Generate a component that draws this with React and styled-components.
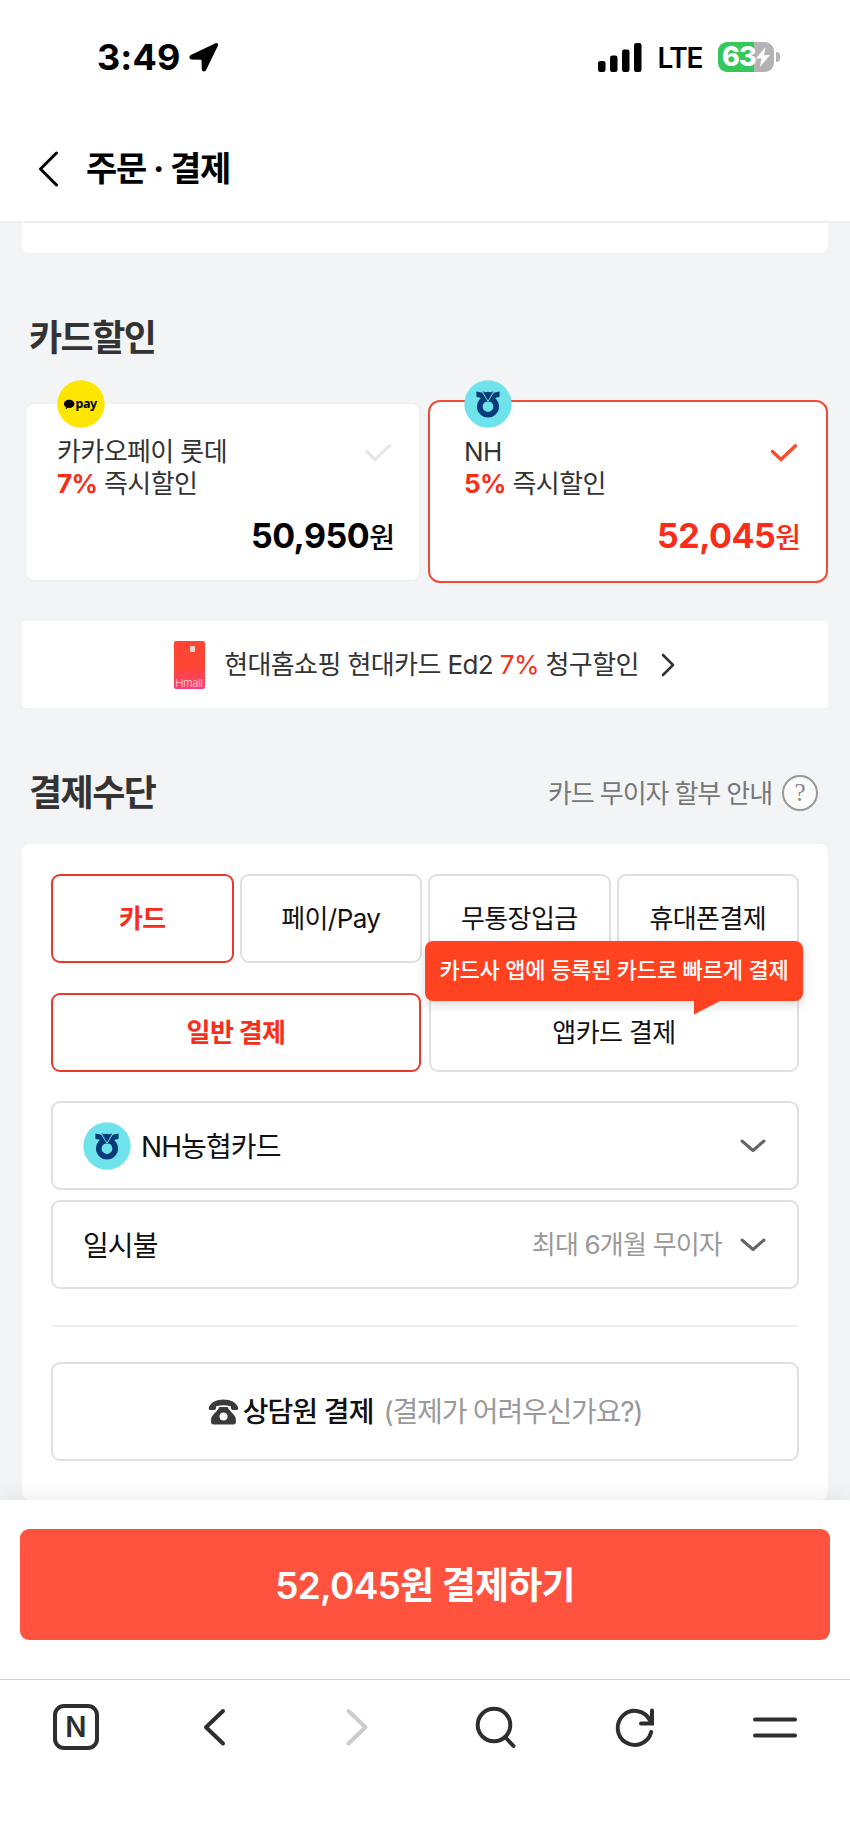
import React from 'react'
import styled, { createGlobalStyle } from 'styled-components'

const GlobalStyle = createGlobalStyle`
  * {
    box-sizing: border-box;
  }

  body {
    margin: 0;
    background: #fff;
    font-family: Inter, 'Noto Sans CJK KR', sans-serif;
    color: #111;
  }

  button {
    font-family: inherit;
    color: inherit;
    padding: 0;
    margin: 0;
    background: none;
    border: 0;
  }

  svg {
    display: block;
    flex: none;
  }
`

const Page = styled.div`
  width: 850px;
  height: 1842px;
  overflow: hidden;
  display: flex;
  flex-direction: column;
  white-space: nowrap;
`

/* status bar */

const StatusBar = styled.div`
  height: 114px;
  padding: 0 70px 0 97px;
  display: flex;
  align-items: center;
  justify-content: space-between;
`

const StatusGroup = styled.div`
  display: flex;
  align-items: center;
  gap: ${(p) => p.$gap};
`

const Time = styled.span`
  font-size: 36px;
  line-height: 40px;
  font-weight: 700;
  letter-spacing: 0.1px;
  color: #000;
`

const Network = styled.span`
  font-size: 28px;
  line-height: 34px;
  font-weight: 600;
  letter-spacing: -1.4px;
  padding-top: 2px;
  color: #000;
`

const Battery = styled.div`
  display: flex;
  align-items: center;
  gap: 2px;
`

const BatteryBody = styled.div`
  width: 56px;
  height: 30px;
  border-radius: 9px;
  display: flex;
  align-items: center;
  padding-left: 4px;
  background: linear-gradient(90deg, #34c759 64%, #b4b2b4 64%);
  color: #fff;
  font-size: 27px;
  line-height: 30px;
  font-weight: 800;
  letter-spacing: -0.8px;
`

const BatteryTip = styled.div`
  width: 4px;
  height: 10px;
  border-radius: 0 4px 4px 0;
  background: #b4b2b4;
`

/* header */

const Header = styled.header`
  height: 109px;
  padding: 3px 0 0 38px;
  display: flex;
  align-items: center;
  gap: 28px;
  border-bottom: 2px solid #eeeff0;
`

const Title = styled.h1`
  margin: 0;
  font-size: 34px;
  line-height: 44px;
  font-weight: 700;
  letter-spacing: -1.2px;
  color: #000;
`

/* content */

const Content = styled.main`
  height: 1277px;
  padding: 0 22px;
  overflow: hidden;
  background: #f3f4f6;
`

const PrevPanel = styled.div`
  height: 30px;
  border-radius: 0 0 8px 8px;
  background: #fff;
`

const SectionHead = styled.div`
  height: 50px;
  padding: 1px 10px 0 7px;
  margin-top: ${(p) => p.$top};
  display: flex;
  align-items: center;
  justify-content: space-between;
`

const SectionTitle = styled.h2`
  margin: 0;
  font-size: 36px;
  line-height: 50px;
  font-weight: 700;
  letter-spacing: -1.5px;
  color: #333;
`

const Guide = styled.div`
  display: flex;
  align-items: center;
  gap: 10px;
  font-size: 26px;
  line-height: 36px;
  letter-spacing: -1.1px;
  color: #777;
`

const GuideText = styled.span`
  padding-top: 3px;
`

const HelpMark = styled.span`
  width: 36px;
  height: 36px;
  border: 2px solid #999;
  border-radius: 50%;
  background: #fbfbfc;
  font-family: 'Liberation Serif', serif;
  font-size: 25px;
  line-height: 32px;
  text-align: center;
  letter-spacing: 0;
  color: #888;
`

const DiscountList = styled.div`
  margin-top: 38px;
  padding-left: 4px;
  display: flex;
  align-items: center;
  gap: 9px;
`

const DiscountCard = styled.div`
  position: relative;
  width: ${(p) => (p.$selected ? '400px' : '393px')};
  height: ${(p) => (p.$selected ? '183px' : '176px')};
  padding: ${(p) => (p.$selected ? '34px 28px 0 34px' : '32px 27px 0 31px')};
  border: ${(p) => (p.$selected ? '2px solid #f24b35' : '0')};
  border-radius: ${(p) => (p.$selected ? '12px' : '8px')};
  background: #fff;
  box-shadow: ${(p) => (p.$selected ? 'none' : '0 0 3px rgba(0, 0, 0, 0.05)')};
`

const CardBadge = styled.div`
  position: absolute;
  top: ${(p) => (p.$selected ? '-22px' : '-24px')};
  left: ${(p) => (p.$selected ? '34px' : '31px')};
`

const CardTop = styled.div`
  display: flex;
  justify-content: space-between;
`

const CardName = styled.p`
  margin: 0;
  font-size: 26px;
  line-height: 32px;
  letter-spacing: -0.6px;
  color: #333;
`

const Rate = styled.strong`
  font-weight: ${(p) => (p.$light ? 400 : 700)};
  color: #fa2d19;
`

const CheckBox = styled.div`
  padding-top: 7px;
`

const Price = styled.div`
  margin: 14px -3px 0 0;
  text-align: right;
  font-size: 34px;
  line-height: 44px;
  font-weight: 700;
  letter-spacing: -0.5px;
  color: ${(p) => (p.$selected ? '#fa2d19' : '#000')};

  span {
    font-size: 28px;
    font-weight: 500;
    letter-spacing: 0;
  }
`

const Banner = styled.div`
  height: 87px;
  margin-top: 38px;
  padding-right: 1px;
  border-radius: 4px;
  background: #fff;
  display: flex;
  align-items: center;
  justify-content: center;
  font-size: 26px;
  line-height: 36px;
  letter-spacing: -0.6px;
  color: #333;
`

const BannerText = styled.span`
  margin: 0 22px 0 19px;
`

const MiniCard = styled.div`
  width: 31px;
  height: 48px;
  padding: 5px 1px 0;
  border-radius: 2px;
  display: flex;
  flex-direction: column;
  justify-content: space-between;
  background: linear-gradient(#ff4634 55%, #fb3f7c);
  color: #ffb9b4;
  font-size: 11px;
  line-height: 12px;
  letter-spacing: -0.4px;
`

const Chip = styled.i`
  width: 5px;
  height: 6px;
  margin-left: 15px;
  border-radius: 1px;
  background: #e9d9cf;
`

/* payment panel */

const Panel = styled.section`
  height: 656px;
  margin-top: 27px;
  padding: 30px 29px 0;
  border-radius: 8px;
  background: #fff;
`

const MethodGrid = styled.div`
  display: grid;
  grid-template-columns: repeat(4, 1fr);
  gap: 6px;
`

const TypeGrid = styled.div`
  position: relative;
  display: grid;
  grid-template-columns: repeat(2, 1fr);
  gap: 8px;
  margin-top: 30px;
`

const Option = styled.button`
  height: ${(p) => p.$height};
  border: 2px solid ${(p) => (p.$active ? '#e8392a' : '#e0e0e0')};
  border-radius: 9px;
  font-size: 26px;
  line-height: 36px;
  font-weight: ${(p) => (p.$active ? 700 : 400)};
  letter-spacing: -0.6px;
  color: ${(p) => (p.$active ? '#fa2d19' : '#111')};
`

const Tooltip = styled.div`
  position: absolute;
  top: -52px;
  right: -4px;
  width: 378px;
  height: 60px;
  border-radius: 8px;
  background: #ff4320;
  box-shadow: 0 4px 12px rgba(0, 0, 0, 0.14);
  font-size: 22px;
  line-height: 59px;
  font-weight: 500;
  letter-spacing: -0.2px;
  text-align: center;
  color: #fff;

  svg {
    position: absolute;
    top: 59px;
    left: 269px;
  }
`

const Select = styled.div`
  height: 89px;
  margin-top: ${(p) => p.$top};
  padding: 0 31px 0 30px;
  border: 2px solid #e0e0e0;
  border-radius: 9px;
  display: flex;
  align-items: center;
  font-size: 28px;
  line-height: 40px;
  letter-spacing: -0.9px;

  svg:last-child {
    margin-left: 18px;
  }
`

const SelectLabel = styled.span`
  flex: 1;
  padding-top: 3px;
  margin-left: ${(p) => (p.$icon ? '10px' : '0')};
`

const SelectHint = styled.span`
  padding-top: 1px;
  font-size: 26px;
  letter-spacing: -0.8px;
  color: #999;
`

const Divider = styled.hr`
  height: 2px;
  margin: 36px 0 35px;
  border: 0;
  background: #efefef;
`

const Counsel = styled.button`
  width: 100%;
  height: 99px;
  border: 2px solid #e0e0e0;
  border-radius: 9px;
  display: flex;
  align-items: center;
  justify-content: center;
  font-size: 28px;
  line-height: 40px;
  font-weight: 500;
  letter-spacing: -0.9px;

  span {
    margin-left: 4px;
  }

  em {
    margin-left: 10px;
    font-style: normal;
    font-weight: 400;
    letter-spacing: -1.2px;
    color: #999;
  }
`

/* bottom */

const PayBar = styled.div`
  position: relative;
  height: 179px;
  padding: 29px 20px 0;
  background: #fff;
  box-shadow: 0 -4px 20px rgba(0, 0, 0, 0.07);
`

const PayButton = styled.button`
  width: 100%;
  height: 111px;
  padding-top: 2px;
  border-radius: 9px;
  background: #ff5340;
  font-size: 37px;
  line-height: 50px;
  font-weight: 600;
  letter-spacing: -0.8px;
  color: #fff;
`

const Toolbar = styled.nav`
  position: relative;
  height: 163px;
  padding: 24px 52px 0 53px;
  border-top: 1px solid #d5d5d5;
  background: #fff;
  display: flex;
  align-items: flex-start;
  justify-content: space-between;
`

const HomeMark = styled.span`
  width: 46px;
  height: 46px;
  border: 4px solid #2e2e2e;
  border-radius: 11px;
  font-size: 28px;
  line-height: 38px;
  font-weight: 600;
  text-align: center;
  color: #2e2e2e;
`

const NhLogo = () => (
  <svg width="48" height="48" viewBox="0 0 48 48">
    <circle cx="24" cy="24" r="23.7" fill="#6ee3ec" />
    <circle cx="24" cy="26.5" r="8.2" fill="none" stroke="#073a78" strokeWidth="5.6" />
    <path d="M12.4 11.6c2.600.9 5.400.9 7 .6L24 19.500l4.600-7.300c1.600.3 4.400.3 7-.6v5.200c-1.200.7-2.600.8-3.600.7L29 21.500H19l-3-4c-1 .1-2.400 0-3.600-.7z" fill="#073a78" />
    <path d="M17.600 11l6.400 10.200L30.400 11" fill="none" stroke="#6ee3ec" strokeWidth="1" />
    <path d="M18.800 10.900c1.700 1.500 3.600 1.700 5.200.9 1.600.8 3.500.6 5.200-.9L24 19.400z" fill="#073a78" />
  </svg>
)

const KakaoLogo = () => (
  <svg width="48" height="48" viewBox="0 0 48 48">
    <circle cx="24" cy="24" r="23.7" fill="#ffe600" />
    <path d="M12.200 19.800c-3 0-5.200 1.800-5.200 4.100 0 1.400.8 2.600 2.100 3.300l-.5 2 2.500-1.400c.4.100.7.100 1.100.1 2.900 0 5.200-1.800 5.200-4s-2.300-4.100-5.200-4.100z" fill="#000" />
    <text x="18.600" y="28" fontSize="12.500" fontWeight="700" fontFamily="Noto Sans, sans-serif" textLength="21.500">pay</text>
  </svg>
)

const Check = ({ color }) => (
  <svg width="28" height="20" viewBox="0 0 28 20">
    <path d="M2.500 8.500l8.500 8L25.500 2.800" fill="none" stroke={color} strokeWidth="3.400" strokeLinecap="round" />
  </svg>
)

const Down = () => (
  <svg width="26" height="14" viewBox="0 0 26 14">
    <path d="M2 2l11 9.500L24 2" fill="none" stroke="#666" strokeWidth="3" strokeLinecap="round" strokeLinejoin="round" />
  </svg>
)

const Phone = () => (
  <svg width="31" height="26" viewBox="0 0 31 26">
    <path d="M.8 8.800C2.500 3.300 8.600.5 15.500.5s13 2.800 14.700 8.300c.3 1.200-.2 2-1.300 2.100l-3.800.2c-1 0-1.700-.5-1.900-1.400l-.4-2.500c-4.500-1.300-10.100-1.300-14.600 0l-.4 2.500c-.2.900-.9 1.400-1.900 1.400l-3.800-.2C1 10.800.5 10 .8 8.800z" fill="#3a3a3a" />
    <path d="M11.500 8h8l1.500 2.500 5 5.500c1.300 1.500 1.900 3 1.900 4.800v2.200c0 1.500-.9 2.500-2.400 2.500H5.500c-1.500 0-2.400-1-2.400-2.500v-2.200c0-1.800.6-3.300 1.900-4.800l5-5.500z" fill="#3a3a3a" />
    <circle cx="15.500" cy="17.500" r="4" fill="#fff" />
  </svg>
)

const Icon = ({ width, height, color = '#2e2e2e', stroke = 4, children }) => (
  <svg
    width={width}
    height={height}
    viewBox={`0 0 ${width} ${height}`}
    fill="none"
    stroke={color}
    strokeWidth={stroke}
    strokeLinecap="round"
    strokeLinejoin="round"
  >
    {children}
  </svg>
)

const discounts = [
  { name: '카카오페이 롯데', rate: '7%', price: '50,950', logo: <KakaoLogo />, selected: false },
  { name: 'NH', rate: '5%', price: '52,045', logo: <NhLogo />, selected: true },
]

const methods = ['카드', '페이/Pay', '무통장입금', '휴대폰결제']

function App() {
  return (
    <Page>
      <GlobalStyle />
      <StatusBar>
        <StatusGroup $gap="9px">
          <Time>3:49</Time>
          <svg width="30" height="30" viewBox="0 0 30 30">
            <path d="M26.500 1.300L1.800 13c-2.200 1.200-1.600 4.300.8 4.400l9.200.3c.4 0 .7.300.7.700l.3 8.800c.1 2.500 3.200 3.100 4.300.8L28.900 3.800c.8-1.800-.6-3.300-2.400-2.500z" fill="#000" />
          </svg>
        </StatusGroup>
        <StatusGroup $gap="16px">
          <svg width="44" height="29" viewBox="0 0 44 29">
            <rect x="0" y="18" width="7.500" height="11" rx="2.300" />
            <rect x="12" y="12.500" width="7.500" height="16.500" rx="2.300" />
            <rect x="24" y="6.500" width="7.500" height="22.500" rx="2.300" />
            <rect x="36" y="0" width="7.500" height="29" rx="2.300" />
          </svg>
          <Network>LTE</Network>
          <Battery>
            <BatteryBody>
              63
              <svg width="14" height="20" viewBox="0 0 14 20">
                <path d="M9.500 0L0 11.500h5.500L3.800 20 14 8H8z" fill="#fff" />
              </svg>
            </BatteryBody>
            <BatteryTip />
          </Battery>
        </StatusGroup>
      </StatusBar>

      <Header>
        <Icon width={20} height={36} color="#000" stroke={3}>
          <path d="M18.500 2L2.500 18l16 16" />
        </Icon>
        <Title>주문 · 결제</Title>
      </Header>

      <Content>
        <PrevPanel />

        <SectionHead $top="59px">
          <SectionTitle>카드할인</SectionTitle>
        </SectionHead>
        <DiscountList>
          {discounts.map((d) => (
            <DiscountCard key={d.name} $selected={d.selected}>
              <CardBadge $selected={d.selected}>{d.logo}</CardBadge>
              <CardTop>
                <CardName>
                  {d.name}
                  <br />
                  <Rate>{d.rate}</Rate> 즉시할인
                </CardName>
                <CheckBox>
                  <Check color={d.selected ? '#fa4a2c' : '#e8e8e8'} />
                </CheckBox>
              </CardTop>
              <Price $selected={d.selected}>
                {d.price}
                <span>원</span>
              </Price>
            </DiscountCard>
          ))}
        </DiscountList>

        <Banner>
          <MiniCard>
            <Chip />
            Hmall
          </MiniCard>
          <BannerText>
            현대홈쇼핑 현대카드 Ed2 <Rate $light>7%</Rate> 청구할인
          </BannerText>
          <Icon width={14} height={24} color="#333" stroke={2.6}>
            <path d="M2 2l10 10L2 22" />
          </Icon>
        </Banner>

        <SectionHead $top="59px">
          <SectionTitle>결제수단</SectionTitle>
          <Guide>
            <GuideText>카드 무이자 할부 안내</GuideText>
            <HelpMark>?</HelpMark>
          </Guide>
        </SectionHead>

        <Panel>
          <MethodGrid>
            {methods.map((name, i) => (
              <Option key={name} $height="89px" $active={i === 0}>
                {name}
              </Option>
            ))}
          </MethodGrid>
          <TypeGrid>
            <Option $height="79px" $active>
              일반 결제
            </Option>
            <Option $height="79px">앱카드 결제</Option>
            <Tooltip>
              카드사 앱에 등록된 카드로 빠르게 결제
              <svg width="28" height="15" viewBox="0 0 28 15">
                <path d="M0 0h28L0 14.500z" fill="#ff4320" />
              </svg>
            </Tooltip>
          </TypeGrid>

          <Select $top="29px">
            <NhLogo />
            <SelectLabel $icon>NH농협카드</SelectLabel>
            <Down />
          </Select>
          <Select $top="10px">
            <SelectLabel>일시불</SelectLabel>
            <SelectHint>최대 6개월 무이자</SelectHint>
            <Down />
          </Select>

          <Divider />

          <Counsel>
            <Phone />
            <span>상담원 결제</span>
            <em>(결제가 어려우신가요?)</em>
          </Counsel>
        </Panel>
      </Content>

      <PayBar>
        <PayButton>52,045원 결제하기</PayButton>
      </PayBar>

      <Toolbar>
        <HomeMark>N</HomeMark>
        <Icon width={46} height={48}>
          <path d="M30 7L13 23.300l17 16.200" />
        </Icon>
        <Icon width={46} height={48} color="#ccc">
          <path d="M15.500 7l17 16.300-17 16.200" />
        </Icon>
        <Icon width={46} height={48}>
          <circle cx="22" cy="21" r="16.300" />
          <path d="M34 34l7.500 8" />
        </Icon>
        <Icon width={46} height={48}>
          <path d="M39.200 28A17 17 0 1 1 38 16.500" />
          <path d="M40 6.500v13H29" strokeLinejoin="miter" />
        </Icon>
        <Icon width={46} height={48}>
          <path d="M3 15.500h40M3 31.500h40" />
        </Icon>
      </Toolbar>
    </Page>
  )
}

export default App
